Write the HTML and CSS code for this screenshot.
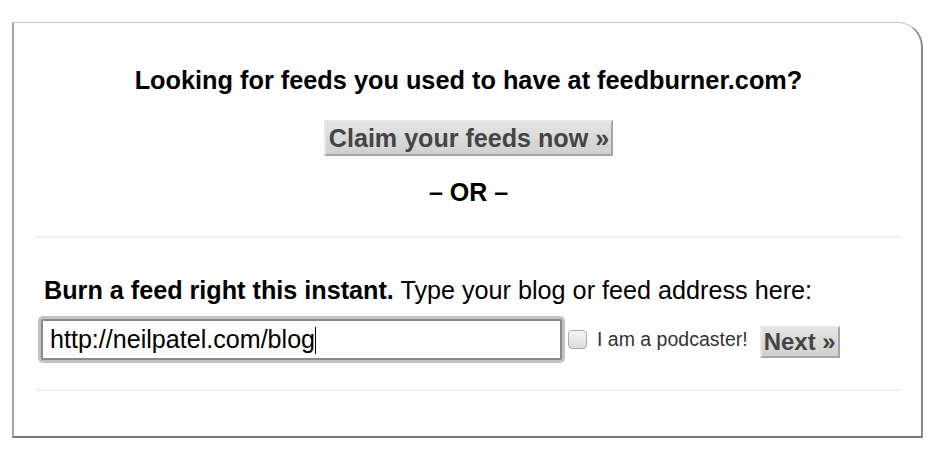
FILE: index.html
```html
<!DOCTYPE html>
<html>
<head>
<meta charset="utf-8">
<link rel="stylesheet" href="styles.css">
</head>
<body>
<div class="box">
  <h2 class="heading">Looking for feeds you used to have at feedburner.com?</h2>
  <div class="center"><button class="btn btn-claim">Claim your feeds now »</button></div>
  <p class="or">– OR –</p>
  <div class="sep"></div>
  <div class="burn">
    <p class="burn-text"><b>Burn a feed right this instant.</b> Type your blog or feed address here:</p>
    <div class="row">
      <div class="url-input">http://neilpatel.com/blog<span class="caret"></span></div>
      <span class="check"></span>
      <span class="label">I am a podcaster!</span>
      <button class="btn btn-next">Next »</button>
    </div>
  </div>
  <div class="sep sep-bottom"></div>
</div>
</body>
</html>
```

FILE: styles.css
```css
html, body {
  margin: 0;
  padding: 0;
  background: #fff;
}
body {
  font-family: "Liberation Sans", Arial, Helvetica, sans-serif;
  color: #000;
  padding: 22px 0 0 12px;
}
.box {
  width: 865px;
  height: 413px;
  padding: 0 20px 0 22px;
  border-top: 1px solid #c6c6c6;
  border-left: 2px solid #a4a4a4;
  border-right: 2px solid #8a8a8a;
  border-bottom: 2px solid #777;
  border-top-right-radius: 25px;
}
.heading {
  margin: 42px 0 0;
  font-size: 25.3px;
  line-height: 30px;
  font-weight: bold;
  text-align: center;
}
.center {
  display: flex;
  justify-content: center;
  margin-top: 25px;
}
.btn {
  font-family: "Liberation Sans", Arial, Helvetica, sans-serif;
  font-weight: bold;
  color: #444;
  background: linear-gradient(#e4e4e4, #d0d0d0);
  border-style: solid;
  border-color: #e8e8e8 #a6a6a6 #a6a6a6 #e8e8e8;
  border-width: 2px;
  margin: 0;
  cursor: pointer;
}
.btn-claim {
  font-size: 25.1px;
  line-height: 30px;
  padding: 1px 2px 1px 3px;
}
.or {
  margin: 21px 0 0;
  text-align: center;
  font-size: 25px;
  line-height: 30px;
  font-weight: bold;
}
.sep {
  height: 2px;
  background: #efefef;
  margin-top: 29px;
}
.burn {
  padding-left: 5px;
}
.burn-text {
  margin: 37px 0 0 3px;
  font-size: 25.2px;
  line-height: 30px;
}
.row {
  display: flex;
  align-items: center;
  margin-top: 14px;
}
.url-input {
  width: 503px;
  height: 30px;
  padding: 3px 7px 4px 7px;
  font-size: 25.1px;
  line-height: 30px;
  border: 2px solid #8a8a8a;
  border-radius: 2px;
  box-shadow: 0 0 0 3px #c2c2c2;
  background: #fff;
  white-space: nowrap;
}
.caret {
  display: inline-block;
  width: 1px;
  height: 27px;
  background: #000;
  vertical-align: -6px;
}
.check {
  width: 17px;
  height: 17px;
  margin: 0 0 0 6px;
  border: 1px solid #a9a9a9;
  border-radius: 4px;
  background: linear-gradient(#f6f6f6, #dcdcdc);
}
.label {
  margin-left: 10px;
  font-size: 19.5px;
  color: #333;
}
.btn-next {
  margin-left: 12px;
  margin-top: 4px;
  font-size: 24px;
  line-height: 28px;
  padding: 0 2px 0 2px;
}
.sep-bottom {
  margin-top: 29px;
}
```
